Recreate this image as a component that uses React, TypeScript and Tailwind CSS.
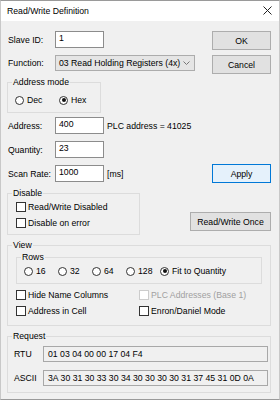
import React from "react";

function Radio({ label, checked, className }: { label: string; checked?: boolean; className?: string }) {
  return (
    <div className={"flex items-center gap-[3px] " + (className ?? "")}>
      <span className="w-[9px] h-[9px] rounded-full border border-[#333] bg-white flex items-center justify-center shrink-0">
        {checked && <span className="w-[4px] h-[4px] rounded-full bg-[#111]" />}
      </span>
      <span>{label}</span>
    </div>
  );
}

function Check({ label, disabled, className }: { label: string; disabled?: boolean; className?: string }) {
  return (
    <div className={"flex items-center gap-[2px] h-[10px] " + (className ?? "")}>
      <span
        className={
          "w-[10px] h-[10px] border bg-white shrink-0 " +
          (disabled ? "border-[#cccccc]" : "border-[#333]")
        }
      />
      <span className={disabled ? "text-[#a0a0a0]" : ""}>{label}</span>
    </div>
  );
}

function Button({ children, primary, className }: { children: React.ReactNode; primary?: boolean; className?: string }) {
  return (
    <div
      className={
        "h-[19px] flex items-center justify-center border " +
        (primary ? "border-[#0078d7] bg-[#e5f1fb]" : "border-[#adadad] bg-[#e1e1e1]") +
        " " +
        (className ?? "")
      }
    >
      {children}
    </div>
  );
}

function Input({ value }: { value: string }) {
  return (
    <div className="w-[49px] h-[17px] border border-[#8c8c8c] bg-white pl-[3px] pt-[1px]">{value}</div>
  );
}

function Group({ title, className, children }: { title: string; className?: string; children: React.ReactNode }) {
  return (
    <fieldset className={"border border-[#dcdcdc] p-0 m-0 " + (className ?? "")}>
      <legend className="ml-[4px] px-[1px] leading-[10px]">{title}</legend>
      {children}
    </fieldset>
  );
}

export default function App() {
  return (
    <div className="w-[280px] h-[401px] bg-white font-['Liberation_Sans',Arial,sans-serif] text-[8.7px] leading-[10px] text-black">
      <div className="w-[280px] h-[400px] bg-[#f0f0f0] border-t border-b border-x border-[#9a9a9a] border-x-[#c8c8c8] flex flex-col">
        {/* title bar */}
        <div className="h-[20px] bg-white flex items-center justify-between pl-[6px] pr-[7px] shrink-0">
          <span>Read/Write Definition</span>
          <svg width="9" height="9" viewBox="0 0 9 9" className="mb-[1px]">
            <path d="M0.5 0.5 L8.5 8.5 M8.5 0.5 L0.5 8.5" stroke="#222" strokeWidth="1" />
          </svg>
        </div>

        <div className="flex flex-col pl-[6px] pr-[8px] pt-[10px]">
          {/* Slave ID */}
          <div className="flex items-start justify-between h-[19px]">
            <div className="flex items-center">
              <span className="w-[48px] pl-[1px]">Slave ID:</span>
              <Input value="1" />
            </div>
            <Button className="w-[59px]">OK</Button>
          </div>

          {/* Function */}
          <div className="flex items-start justify-between h-[19px] mt-[5px]">
            <div className="flex items-center h-[16px]">
              <span className="w-[48px] pl-[1px]">Function:</span>
              <div className="w-[140px] h-[16px] border border-[#acacac] bg-[#e5e5e5] flex items-center justify-between pl-[3px] pr-[4px]">
                <span>03 Read Holding Registers (4x)</span>
                <svg width="7" height="4" viewBox="0 0 7 4">
                  <path d="M0.5 0.5 L3.5 3.5 L6.5 0.5" stroke="#777" fill="none" strokeWidth="1" />
                </svg>
              </div>
            </div>
            <Button className="w-[59px]">Cancel</Button>
          </div>

          {/* Address mode */}
          <Group title="Address mode" className="w-[94px] h-[36px] mt-[3px]">
            <div className="flex pl-[7px] pt-[8px]">
              <Radio label="Dec" className="w-[44px]" />
              <Radio label="Hex" checked />
            </div>
          </Group>

          {/* Address */}
          <div className="flex items-center h-[17px] mt-[4px]">
            <span className="w-[48px] pl-[1px]">Address:</span>
            <Input value="400" />
            <span className="ml-[3px]">PLC address = 41025</span>
          </div>

          {/* Quantity */}
          <div className="flex items-center h-[17px] mt-[7px]">
            <span className="w-[48px] pl-[1px]">Quantity:</span>
            <Input value="23" />
          </div>

          {/* Scan rate */}
          <div className="flex items-center justify-between h-[19px] mt-[6px]">
            <div className="flex items-center">
              <span className="w-[48px] pl-[1px]">Scan Rate:</span>
              <Input value="1000" />
              <span className="ml-[3px]">[ms]</span>
            </div>
            <Button primary className="w-[59px]">
              Apply
            </Button>
          </div>

          {/* Disable */}
          <div className="flex items-start justify-between mt-[5px]">
            <Group title="Disable" className="w-[133px] h-[47px]">
              <div className="flex flex-col gap-[6px] pl-[8px] pt-[4px]">
                <Check label="Read/Write Disabled" />
                <Check label="Disable on error" />
              </div>
            </Group>
            <Button className="w-[81px] mt-[24px]">Read/Write Once</Button>
          </div>

          {/* View */}
          <Group title="View" className="w-full h-[86px] mt-[5px]">
            <div className="flex flex-col pl-[8px] pr-[8px] pt-[2px]">
              <Group title="Rows" className="w-full h-[32px]">
                <div className="flex pl-[7px] pt-[4px]">
                  <Radio label="16" className="w-[34px]" />
                  <Radio label="32" className="w-[34px]" />
                  <Radio label="64" className="w-[34px]" />
                  <Radio label="128" className="w-[34px]" />
                  <Radio label="Fit to Quantity" checked />
                </div>
              </Group>
              <div className="grid grid-cols-[123px_1fr] gap-y-[6px] mt-[6px]">
                <Check label="Hide Name Columns" />
                <Check label="PLC Addresses (Base 1)" disabled />
                <Check label="Address in Cell" />
                <Check label="Enron/Daniel Mode" />
              </div>
            </div>
          </Group>

          {/* Request */}
          <Group title="Request" className="w-full h-[62px] mt-[5px]">
            <div className="flex flex-col gap-[8px] pl-[6px] pr-[2px] pt-[5px]">
              <div className="flex items-center">
                <span className="w-[29px]">RTU</span>
                <div className="flex-1 h-[16px] border border-[#a8a8a8] bg-[#f0f0f0] pl-[4px] flex items-center">
                  01 03 04 00 00 17 04 F4
                </div>
              </div>
              <div className="flex items-center">
                <span className="w-[29px]">ASCII</span>
                <div className="flex-1 h-[16px] border border-[#a8a8a8] bg-[#f0f0f0] pl-[4px] flex items-center">
                  3A 30 31 30 33 30 34 30 30 30 30 31 37 45 31 0D 0A
                </div>
              </div>
            </div>
          </Group>
        </div>
      </div>
    </div>
  );
}
